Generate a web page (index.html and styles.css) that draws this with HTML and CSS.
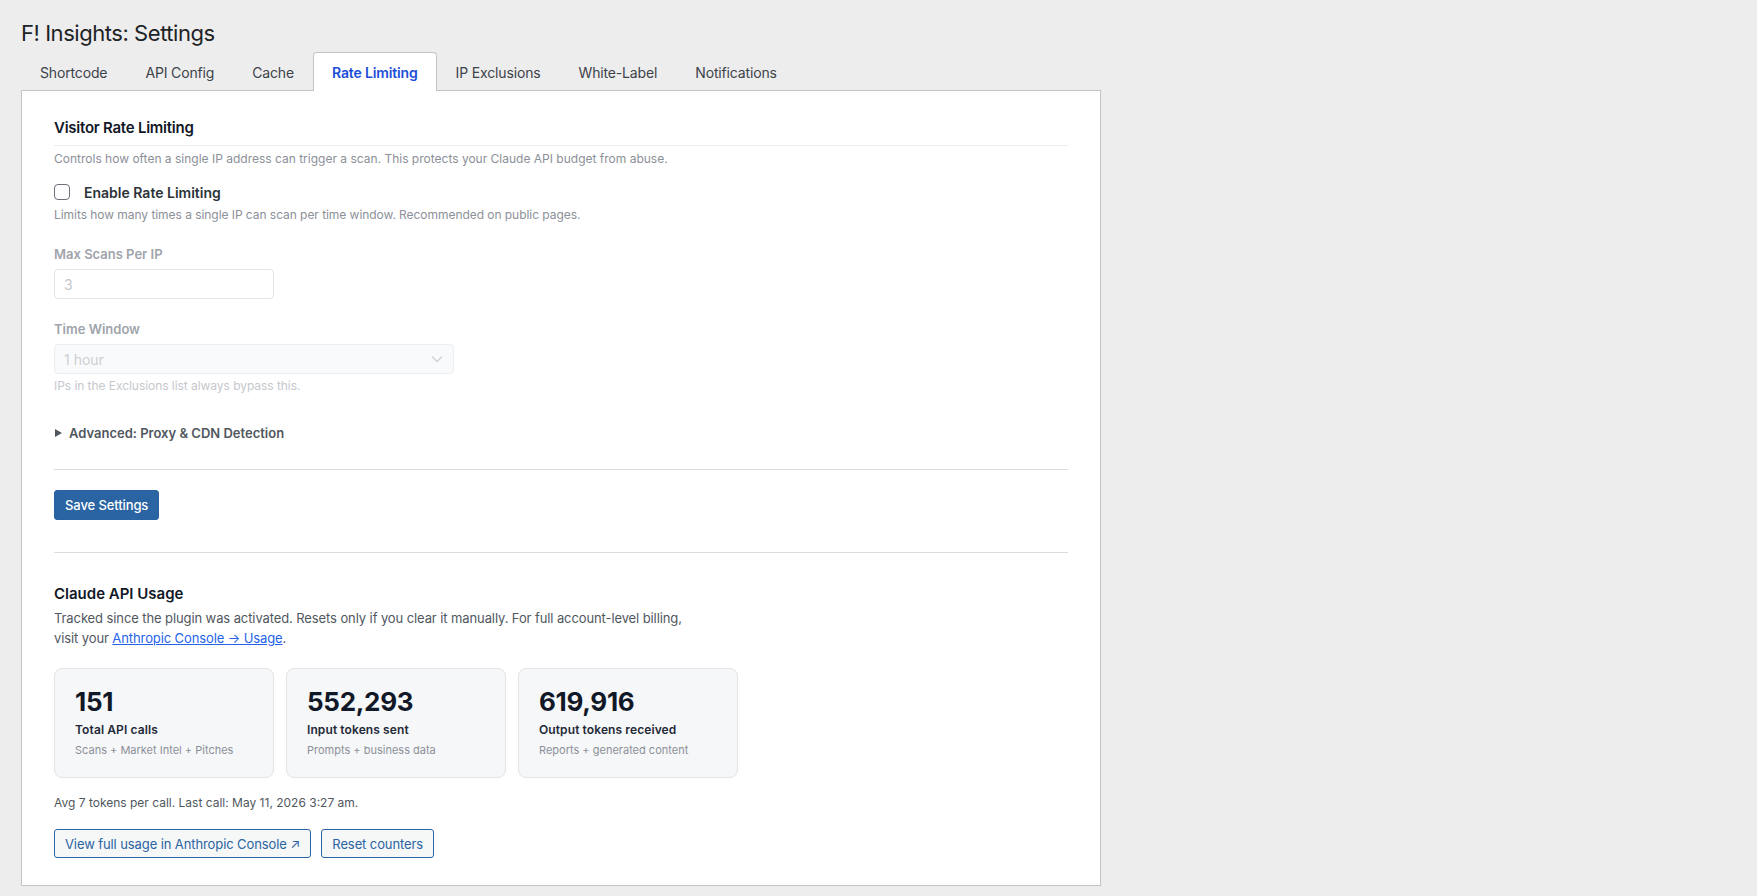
FILE: index.html
```html
<!DOCTYPE html>
<html lang="en">
<head>
<meta charset="utf-8">
<title>F! Insights: Settings</title>
<link rel="stylesheet" href="styles.css">
</head>
<body>
<div class="wrap">
  <h1 class="page-title">F! Insights: Settings</h1>
  <nav class="tabs">
    <a class="tab">Shortcode</a>
    <a class="tab">API Config</a>
    <a class="tab">Cache</a>
    <a class="tab tab-active">Rate Limiting</a>
    <a class="tab">IP Exclusions</a>
    <a class="tab">White-Label</a>
    <a class="tab">Notifications</a>
  </nav>
  <div class="panel">
    <h2 class="section-title section-title-rule">Visitor Rate Limiting</h2>
    <p class="section-desc">Controls how often a single IP address can trigger a scan. This protects your Claude API budget from abuse.</p>

    <label class="check-row">
      <input type="checkbox" class="check">
      <span class="check-label">Enable Rate Limiting</span>
    </label>
    <p class="help">Limits how many times a single IP can scan per time window. Recommended on public pages.</p>

    <div class="field-label field-label-first">Max Scans Per IP</div>
    <div class="text-input">3</div>

    <div class="field-label">Time Window</div>
    <div class="select-input">
      <span>1 hour</span>
      <svg class="chev" width="12" height="8" viewBox="0 0 12 8"><path d="M1 1.5 L6 6.5 L11 1.5" fill="none" stroke="#cfd2d7" stroke-width="1.3"/></svg>
    </div>
    <p class="hint">IPs in the Exclusions list always bypass this.</p>

    <div class="advanced"><span class="tri"></span>Advanced: Proxy &amp; CDN Detection</div>

    <hr class="rule rule-a">
    <button class="btn-primary">Save Settings</button>
    <hr class="rule rule-b">

    <h2 class="section-title usage-title">Claude API Usage</h2>
    <p class="usage-desc">Tracked since the plugin was activated. Resets only if you clear it manually. For full account-level billing,<br>visit your <a class="link">Anthropic Console → Usage</a>.</p>

    <div class="cards">
      <div class="card">
        <div class="card-num">151</div>
        <div class="card-label">Total API calls</div>
        <div class="card-sub">Scans + Market Intel + Pitches</div>
      </div>
      <div class="card">
        <div class="card-num">552,293</div>
        <div class="card-label">Input tokens sent</div>
        <div class="card-sub">Prompts + business data</div>
      </div>
      <div class="card">
        <div class="card-num">619,916</div>
        <div class="card-label">Output tokens received</div>
        <div class="card-sub">Reports + generated content</div>
      </div>
    </div>

    <p class="avg">Avg 7 tokens per call. Last call: May 11, 2026 3:27 am.</p>

    <div class="actions">
      <button class="btn-outline">View full usage in Anthropic Console ↗</button>
      <button class="btn-outline">Reset counters</button>
    </div>
  </div>
</div>
</body>
</html>
```

FILE: styles.css
```css
* { box-sizing: border-box; }
html, body { margin: 0; padding: 0; }
body {
  background: #ededed;
  font-family: Inter, "Noto Sans", "Liberation Sans", sans-serif;
  color: #3c434a;
  width: 1757px;
  height: 896px;
  overflow: hidden;
}
.wrap {
  padding: 18px 0 0 21px;
}
.page-title {
  margin: 0 0 4px 0;
  font-size: 22px;
  line-height: 30px;
  font-weight: 400;
  color: #1d2327;
  letter-spacing: -0.45px;
}
.tabs {
  display: flex;
  margin-bottom: -1px;
}
.tab {
  display: flex;
  align-items: center;
  height: 39px;
  padding: 0 18px;
  border: 1px solid transparent;
  border-bottom: none;
  font-size: 14px;
  color: #3c434a;
  letter-spacing: -0.15px;
}
.tab-active {
  background: #fff;
  border-color: #c3c4c7;
  border-radius: 4px 4px 0 0;
  color: #1d4ed8;
  font-weight: 600;
  position: relative;
  z-index: 1;
}
.panel {
  width: 1080px;
  height: 796px;
  background: #fff;
  border: 1px solid #c3c4c7;
  padding: 27px 32px 0 32px;
}
.section-title {
  margin: 0;
  font-size: 15px;
  line-height: 20px;
  font-weight: 600;
  color: #111827;
  letter-spacing: -0.25px;
}
.section-title-rule {
  padding-bottom: 7px;
  border-bottom: 1px solid #ececee;
}
.section-desc {
  margin: 4px 0 0 0;
  font-size: 12px;
  line-height: 18px;
  color: #8c9098;
}
.check-row {
  display: flex;
  align-items: center;
  gap: 14px;
  margin-top: 14px;
  height: 20px;
}
.check {
  appearance: none;
  -webkit-appearance: none;
  width: 16px;
  height: 16px;
  margin: 0;
  border: 1px solid #6b7079;
  border-radius: 4px;
  background: #fff;
}
.check-label {
  font-size: 14px;
  font-weight: 600;
  color: #2c3338;
  letter-spacing: 0;
}
.help {
  margin: 4px 0 0 0;
  font-size: 12px;
  line-height: 18px;
  color: #8c9098;
  letter-spacing: -0.05px;
}
.field-label {
  margin-top: 21px;
  font-size: 13px;
  line-height: 18px;
  font-weight: 600;
  color: #a0a4ab;
}
.text-input {
  margin-top: 6px;
  width: 220px;
  height: 30px;
  border: 1px solid #e4e6e9;
  border-radius: 4px;
  padding: 0 9px;
  display: flex;
  align-items: center;
  font-size: 14px;
  color: #c4c7cc;
}
.select-input {
  margin-top: 6px;
  width: 400px;
  height: 30px;
  border: 1px solid #eceef0;
  border-radius: 4px;
  background: #f9fafb;
  padding: 0 10px 0 9px;
  display: flex;
  align-items: center;
  justify-content: space-between;
  font-size: 14px;
  color: #ccd0d4;
}
.hint {
  margin: 4px 0 0 0;
  font-size: 12px;
  line-height: 16px;
  color: #c5c8cd;
  letter-spacing: -0.05px;
}
.advanced {
  margin-top: 30px;
  display: flex;
  align-items: center;
  gap: 7px;
  font-size: 13px;
  line-height: 18px;
  font-weight: 600;
  color: #50575e;
}
.tri {
  width: 0;
  height: 0;
  border-left: 7px solid #50575e;
  border-top: 4px solid transparent;
  border-bottom: 4px solid transparent;
  margin-left: 1px;
}
.rule {
  border: none;
  border-top: 1px solid #dcdcde;
  margin: 0;
}
.rule-a { margin-top: 27px; }
.rule-b { margin-top: 32px; }
.btn-primary {
  display: block;
  margin-top: 20px;
  height: 30px;
  padding: 0 10px;
  background: #2a64a3;
  border: 1px solid #2a64a3;
  border-radius: 3px;
  color: #fff;
  font-family: inherit;
  font-size: 13px;
  font-weight: 500;
  letter-spacing: -0.1px;
}
.usage-title {
  margin-top: 31px;
  letter-spacing: 0;
}
.usage-desc {
  margin: 4px 0 0 0;
  font-size: 13px;
  line-height: 20px;
  color: #50575e;
  letter-spacing: -0.1px;
}
.link {
  color: #2563eb;
  text-decoration: underline;
}
.cards {
  display: grid;
  grid-template-columns: 220px 220px 220px;
  gap: 12px;
  margin-top: 20px;
}
.card {
  height: 110px;
  background: #f6f7f9;
  border: 1px solid #e2e4e8;
  border-radius: 8px;
  padding: 17px 20px 0 20px;
}
.card-num {
  font-size: 26px;
  line-height: 32px;
  font-weight: 700;
  color: #111827;
  letter-spacing: -0.3px;
}
.card-label {
  margin-top: 3px;
  font-size: 12px;
  line-height: 18px;
  font-weight: 600;
  color: #1f2937;
  letter-spacing: 0.1px;
}
.card-sub {
  margin-top: 3px;
  font-size: 11px;
  line-height: 16px;
  color: #8c9098;
}
.avg {
  margin: 17px 0 0 0;
  font-size: 12px;
  line-height: 16px;
  color: #50575e;
}
.actions {
  display: flex;
  gap: 10px;
  margin-top: 18px;
}
.btn-outline {
  height: 29px;
  padding: 0 10px;
  background: #f6f7f7;
  border: 1px solid #2b67a6;
  border-radius: 3px;
  color: #2a64a3;
  font-family: inherit;
  font-size: 13px;
  letter-spacing: -0.1px;
}
```
